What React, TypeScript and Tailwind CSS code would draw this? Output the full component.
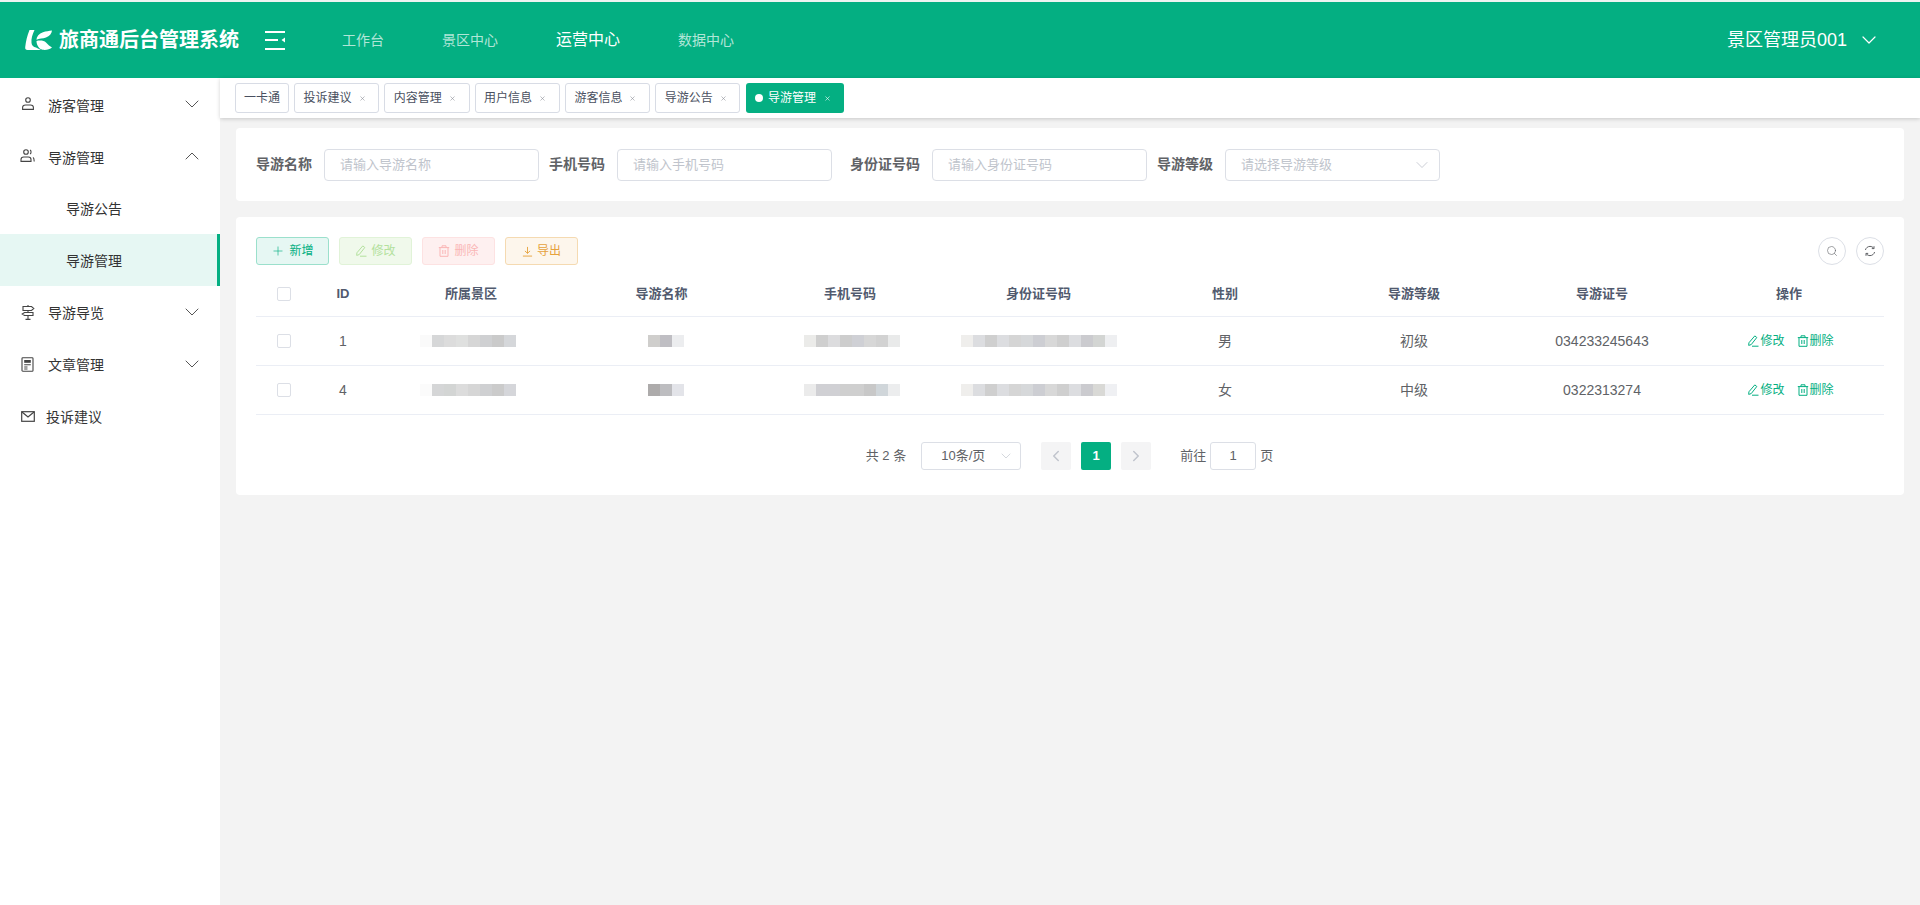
import React from 'react';
import {ChevronDown, ChevronLeft, ChevronRight, ChevronUp, Plus, Search, X} from "lucide-react";

const COLS = "grid grid-cols-[56px_62px_194px_187px_190px_187px_186px_192px_184px_190px]"

const navItems = [
    {label: '工作台', active: false},
    {label: '景区中心', active: false},
    {label: '运营中心', active: true},
    {label: '数据中心', active: false},
]
const tabs = ['投诉建议', '内容管理', '用户信息', '游客信息', '导游公告']

function Logo() {
    return (
        <svg width="27" height="20" viewBox="0 0 27 20" fill="white">
            <path d="M4.5 0 L9.5 0 C7.5 4 6 9 6.5 13 C6.8 15.5 8.5 17 11 17.5 L16 20 L2.5 20 C0.8 20 0 19 0.2 17.2 C0.8 11.6 2.2 5.4 4.5 0 Z"/>
            <path d="M27 0.6 C26.6 3.6 24.6 6.4 21 7.6 C17.6 8.7 14.4 8.6 11.4 9.8 C11.6 6.4 14 3.6 18 2.2 C21 1.2 24 1.2 27 0.6 Z"/>
            <path d="M11.5 11 C15 10 19 10.5 21 12.5 C23 14.5 25 16.5 27 17.5 C25 19.5 21 20.3 17.5 19.8 C14 19 11.5 15 11.5 11 Z"/>
        </svg>
    )
}

function MenuFold() {
    return (
        <svg width="20" height="19" viewBox="0 0 20 19" fill="white">
            <rect x="0" y="0" width="20" height="2"/>
            <rect x="0" y="8" width="13" height="2"/>
            <path d="M20 6.5 V11.5 L16.5 9 Z"/>
            <rect x="0" y="17" width="20" height="2"/>
        </svg>
    )
}

function UserIcon() {
    return (
        <svg width="14" height="14" viewBox="0 0 14 14" fill="none" stroke="#444" strokeWidth="1.1">
            <circle cx="7" cy="3" r="2.3"/>
            <path d="M1.6 12.4 V10.6 C1.6 9 3 8 4.5 8 H9.5 C11 8 12.4 9 12.4 10.6 V12.4 Z"/>
        </svg>
    )
}

function UsersIcon() {
    return (
        <svg width="15" height="14" viewBox="0 0 15 14" fill="none" stroke="#444" strokeWidth="1.1">
            <circle cx="6" cy="3" r="2.3"/>
            <path d="M1 12.4 V10.6 C1 9 2.2 8 3.7 8 H8.3 C9.8 8 11 9 11 10.6 V12.4 Z"/>
            <path d="M10 1 C11.4 1.4 11.4 4.6 10 5"/>
            <path d="M13 8.4 C14 9 14.2 10.5 14.2 12.4"/>
        </svg>
    )
}

function GuideIcon() {
    return (
        <svg width="14" height="15" viewBox="0 0 14 15" fill="none" stroke="#444" strokeWidth="1.1">
            <path d="M2 1.5 H10.5 L12.8 3.5 L10.5 5.5 H2 Z"/>
            <path d="M12 7.5 H3.5 L1.2 9 L3.5 10.5 H12 Z"/>
            <path d="M7 0 V1.5 M7 5.5 V7.5 M7 10.5 V14 M4.5 14.4 H9.5"/>
        </svg>
    )
}

function NewsIcon() {
    return (
        <svg width="13" height="15" viewBox="0 0 13 15" fill="none" stroke="#444" strokeWidth="1.1">
            <rect x="1" y="0.8" width="11" height="13.4" rx="0.8"/>
            <rect x="3.2" y="3" width="6.6" height="2.8" fill="#444" stroke="none"/>
            <path d="M3.2 7.8 H9.8 M3.2 10 H6.5 M3.2 12 H6.5"/>
        </svg>
    )
}

function MailIcon() {
    return (
        <svg width="14" height="11" viewBox="0 0 14 11" fill="none" stroke="#444" strokeWidth="1.2">
            <rect x="0.7" y="0.7" width="12.6" height="9.6"/>
            <path d="M1 1 L7 6 L13 1"/>
        </svg>
    )
}

function PenIcon() {
    return (
        <svg width="12" height="12" viewBox="0 0 12 12" fill="none" stroke="currentColor" strokeWidth="1">
            <path d="M7.8 0.9 L9.8 2.5 L4.2 9.6 L1.7 10.4 L1.9 7.8 Z"/>
            <path d="M5 11.2 H11.5"/>
        </svg>
    )
}

function TrashIcon() {
    return (
        <svg width="12" height="12" viewBox="0 0 12 12" fill="none" stroke="currentColor" strokeWidth="1">
            <path d="M0.8 2.6 H11.2 M4 2.6 V0.8 H8 V2.6"/>
            <path d="M2 2.6 V11.3 H10 V2.6"/>
            <path d="M4.8 5 V9 M7.2 5 V9"/>
        </svg>
    )
}

function DownloadIcon() {
    return (
        <svg width="11" height="11" viewBox="0 0 12 12" fill="none" stroke="currentColor" strokeWidth="1">
            <path d="M6 1 V8 M3.2 5.4 L6 8 L8.8 5.4"/>
            <path d="M1 11 H11"/>
        </svg>
    )
}

function RefreshIcon() {
    return (
        <svg width="12" height="12" viewBox="0 0 12 12" fill="none" stroke="#606266" strokeWidth="1">
            <path d="M1.4 5 C2 2.8 3.8 1.4 6 1.4 C7.6 1.4 8.9 2.1 9.8 3.4"/>
            <path d="M10 1.2 V3.6 H7.8"/>
            <path d="M10.6 7 C10 9.2 8.2 10.6 6 10.6 C4.4 10.6 3.1 9.9 2.2 8.6"/>
            <path d="M2 10.8 V8.4 H4.2"/>
        </svg>
    )
}

function Mosaic({colors, className = ''}: {colors: string[], className?: string}) {
    return (
        <div className={`flex ${className}`}>
            {colors.map((c, i) => (
                <div key={i} className="w-[12px] h-[12px]" style={{backgroundColor: c}}/>
            ))}
        </div>
    )
}

function SideRow({icon, label, open, hasArrow = true, upper = false, lower = false, mail = false}: {
    icon: React.ReactNode, label: string, open?: boolean, hasArrow?: boolean, upper?: boolean, lower?: boolean, mail?: boolean
}) {
    return (
        <div className="h-[52px] flex items-center pl-[20px] pr-[16px] text-[14px] text-[#333]">
            <div className={`w-[15px] flex justify-center ${upper ? 'mt-[-4px]' : ''}`}>{icon}</div>
            <span className={`${mail ? 'ml-[11px]' : 'ml-[13px]'} ${lower ? 'mt-[3px]' : ''}`}>{label}</span>
            {hasArrow && (
                <div className={`ml-auto text-[#555] ${upper ? 'mt-[-4px]' : ''}`}>
                    {open ? <ChevronUp size={24} strokeWidth={1}/> : <ChevronDown size={24} strokeWidth={1}/>}
                </div>
            )}
        </div>
    )
}

function Sidebar() {
    return (
        <aside className="w-[220px] shrink-0 bg-white pt-[2px]">
            <SideRow icon={<UserIcon/>} label="游客管理" upper/>
            <SideRow icon={<UsersIcon/>} label="导游管理" open upper/>
            <div className="h-[50px] flex items-center pl-[66px] text-[14px] text-[#333]">导游公告</div>
            <div className="h-[52px] flex items-center pl-[66px] pt-[2px] text-[14px] text-[#333] bg-[#e6f7f3] border-r-[3px] border-[#04af82]">导游管理</div>
            <SideRow icon={<GuideIcon/>} label="导游导览" lower/>
            <SideRow icon={<NewsIcon/>} label="文章管理" lower/>
            <SideRow icon={<MailIcon/>} label="投诉建议" hasArrow={false} lower mail/>
        </aside>
    )
}

function Header() {
    return (
        <header className="h-[78px] shrink-0 border-t-2 border-[#eef3f1] bg-[#04af82] flex items-center pl-[25px] pr-[39px] text-white">
            <Logo/>
            <span className="ml-[7px] text-[20px] font-bold leading-none">旅商通后台管理系统</span>
            <div className="ml-[26px]"><MenuFold/></div>
            <nav className="ml-[57px] flex items-center gap-[58px]">
                {navItems.map(item => (
                    <span key={item.label} className={item.active ? 'text-[16px] text-white' : 'text-[14px] text-white/70'}>
                        {item.label}
                    </span>
                ))}
            </nav>
            <div className="ml-auto flex items-center">
                <span className="text-[18px]">景区管理员001</span>
                <ChevronDown className="ml-[10px]" size={24} strokeWidth={1.2}/>
            </div>
        </header>
    )
}

function TabBar() {
    return (
        <div className="h-[40px] shrink-0 bg-white flex items-start gap-[5px] pt-[5px] pl-[15px] shadow-[0_1px_4px_rgba(0,0,0,0.18)] relative">
            <div className="h-[30px] w-[54px] flex items-center justify-center border border-[#d8dce5] rounded-[3px] text-[12px] text-[#495060]">一卡通</div>
            {tabs.map(t => (
                <div key={t} className="h-[30px] w-[85.3px] flex items-center pl-[8.5px] border border-[#d8dce5] rounded-[3px] text-[12px] text-[#495060]">
                    {t}
                    <X className="ml-[7px] text-[#8b8f98]" size={7} strokeWidth={2}/>
                </div>
            ))}
            <div className="h-[30px] w-[98px] ml-[0.5px] flex items-center pl-[9px] rounded-[3px] bg-[#04af82] text-[12px] text-white">
                <span className="w-[8px] h-[8px] rounded-full bg-white mr-[5px]"/>
                导游管理
                <X className="ml-[8px]" size={7} strokeWidth={2}/>
            </div>
        </div>
    )
}

function Field({label, placeholder, className = ''}: {label: string, placeholder: string, className?: string}) {
    return (
        <div className={`flex items-center ${className}`}>
            <label className="text-[14px] font-bold text-[#606266] mr-[12px]">{label}</label>
            <input readOnly placeholder={placeholder}
                   className="w-[215px] h-[32px] px-[15px] border border-[#dcdfe6] rounded-[4px] text-[13px] placeholder:text-[#c0c4cc] outline-none"/>
        </div>
    )
}

function QueryCard() {
    return (
        <div className="h-[73px] bg-white rounded-[4px] flex items-center pl-[20px]">
            <Field label="导游名称" placeholder="请输入导游名称"/>
            <Field label="手机号码" placeholder="请输入手机号码" className="ml-[10px]"/>
            <Field label="身份证号码" placeholder="请输入身份证号码" className="ml-[18px]"/>
            <div className="flex items-center ml-[10px]">
                <label className="text-[14px] font-bold text-[#606266] mr-[12px]">导游等级</label>
                <div className="w-[215px] h-[32px] pl-[15px] pr-[7px] border border-[#dcdfe6] rounded-[4px] text-[13px] text-[#c0c4cc] flex items-center justify-between">
                    请选择导游等级
                    <ChevronDown size={20} strokeWidth={1}/>
                </div>
            </div>
        </div>
    )
}

function ToolButton({className, icon, label}: {className: string, icon: React.ReactNode, label: string}) {
    return (
        <button className={`w-[73px] h-[28px] flex items-center justify-center gap-[4px] border rounded-[3px] text-[12px] ${className}`}>
            {icon}
            {label}
        </button>
    )
}

function Toolbar() {
    return (
        <div className="flex items-center gap-[10px]">
            <ToolButton className="bg-[#e6f7f3] border-[#9be0cc] text-[#04af82]" icon={<Plus size={14} strokeWidth={1.1}/>} label="新增"/>
            <ToolButton className="bg-[#f0f9eb] border-[#e1f3d8] text-[#b3e19d]" icon={<PenIcon/>} label="修改"/>
            <ToolButton className="bg-[#fef0f0] border-[#fde2e2] text-[#fab6b6]" icon={<TrashIcon/>} label="删除"/>
            <ToolButton className="bg-[#fdf6ec] border-[#f5dab1] text-[#e6a23c]" icon={<DownloadIcon/>} label="导出"/>
            <div className="ml-auto flex gap-[10px]">
                <div className="w-[28px] h-[28px] rounded-full border border-[#dcdfe6] flex items-center justify-center">
                    <Search size={12} strokeWidth={1.2} className="text-[#606266]"/>
                </div>
                <div className="w-[28px] h-[28px] rounded-full border border-[#dcdfe6] flex items-center justify-center">
                    <RefreshIcon/>
                </div>
            </div>
        </div>
    )
}

const rows = [
    {
        id: '1', sex: '男', level: '初级', card: '034233245643',
        area: ['#fafafa', '#d6d7d8', '#dcdcdc', '#dfe0df', '#d6d6d6', '#cfd0d2', '#cacaca', '#d5d7da'],
        name: ['#cfcecc', '#bfbec3', '#ecedef'],
        phone: ['#ebebe9', '#cfcfcf', '#dcdcde', '#cdcdcd', '#cfd0d5', '#d7d7d7', '#d2d2d2', '#e9eaea'],
        idNo: ['#efeeec', '#dcdde0', '#cfcfcf', '#dcdde0', '#d5d5d5', '#d6d8da', '#cdced3', '#d8d8d8', '#cfcfcf', '#dcdde0', '#cbcbcf', '#d3d5d3', '#eeeff1'],
    },
    {
        id: '4', sex: '女', level: '中级', card: '0322313274',
        area: ['#fbfbfb', '#d5d6d7', '#d3d5d4', '#dcdcdc', '#d6d6d6', '#cfd0d2', '#cbcbcb', '#d5d6da'],
        name: ['#adabab', '#bdbdc0', '#e3e4e9'],
        phone: ['#ebebeb', '#d0d0d4', '#d0d0d4', '#cfcfcf', '#cfcfcf', '#c8c8c8', '#d0d6da', '#ecedee'],
        idNo: ['#efeeec', '#dcdde0', '#cfcfcf', '#dcdde0', '#d5d5d5', '#d6d8da', '#cdced3', '#d8d8d8', '#cfcfcf', '#dcdde0', '#cbcbcf', '#d9d9d6', '#eff0f3'],
    },
]

const headers = ['ID', '所属景区', '导游名称', '手机号码', '身份证号码', '性别', '导游等级', '导游证号', '操作']

function Checkbox() {
    return <div className="w-[14px] h-[14px] border border-[#dcdfe6] rounded-[2px] bg-white"/>
}

function DataTable() {
    return (
        <div className="mt-[8px]">
            <div className={`${COLS} h-[44px] items-center justify-items-center border-b border-[#ebeef5] pb-[1px] text-[13px] font-bold text-[#515a6e]`}>
                <Checkbox/>
                {headers.map(h => <div key={h}>{h}</div>)}
            </div>
            {rows.map(r => (
                <div key={r.id} className={`${COLS} h-[49px] items-center justify-items-center border-b border-[#ebeef5] text-[14px] text-[#606266]`}>
                    <Checkbox/>
                    <div>{r.id}</div>
                    <Mosaic colors={r.area} className="ml-[-6px]"/>
                    <Mosaic colors={r.name} className="ml-[9px]"/>
                    <Mosaic colors={r.phone} className="ml-[4px]"/>
                    <Mosaic colors={r.idNo}/>
                    <div>{r.sex}</div>
                    <div>{r.level}</div>
                    <div>{r.card}</div>
                    <div className="flex items-center gap-[12px] pl-[3px] text-[12px] text-[#04af82]">
                        <span className="flex items-center gap-[1px]"><PenIcon/>修改</span>
                        <span className="flex items-center gap-[1px]"><TrashIcon/>删除</span>
                    </div>
                </div>
            ))}
        </div>
    )
}

function Pagination() {
    return (
        <div className="mt-[27px] flex items-center justify-center text-[13px] text-[#606266] pr-[1px]">
            <span>共 2 条</span>
            <div className="ml-[15px] w-[100px] h-[28px] border border-[#dcdfe6] rounded-[3px] flex items-center pl-[19px] pr-[6px] justify-between">
                10条/页
                <ChevronDown size={16} strokeWidth={1} className="text-[#c0c4cc]"/>
            </div>
            <div className="ml-[20px] w-[30px] h-[28px] rounded-[2px] bg-[#f4f4f5] flex items-center justify-center text-[#c0c4cc]">
                <ChevronLeft size={18} strokeWidth={2}/>
            </div>
            <div className="ml-[10px] w-[30px] h-[28px] rounded-[2px] bg-[#04af82] flex items-center justify-center text-white font-bold">1</div>
            <div className="ml-[10px] w-[30px] h-[28px] rounded-[2px] bg-[#f4f4f5] flex items-center justify-center text-[#c0c4cc]">
                <ChevronRight size={18} strokeWidth={2}/>
            </div>
            <span className="ml-[29px]">前往</span>
            <div className="ml-[4px] mr-[4px] w-[46px] h-[28px] border border-[#dcdfe6] rounded-[3px] flex items-center justify-center">1</div>
            <span>页</span>
        </div>
    )
}

function App() {
    return (
        <div className="h-[905px] flex flex-col bg-[#f3f3f3] overflow-hidden font-['Liberation_Sans','Noto_Sans_CJK_SC',sans-serif]">
            <Header/>
            <div className="flex flex-1 min-h-0">
                <Sidebar/>
                <div className="flex-1 min-w-0 flex flex-col">
                    <TabBar/>
                    <main className="pt-[10px] px-[16px] flex flex-col gap-[16px]">
                        <QueryCard/>
                        <div className="h-[278px] bg-white rounded-[4px] pt-[20px] px-[20px]">
                            <Toolbar/>
                            <DataTable/>
                            <Pagination/>
                        </div>
                    </main>
                </div>
            </div>
        </div>
    );
}

export default App;
